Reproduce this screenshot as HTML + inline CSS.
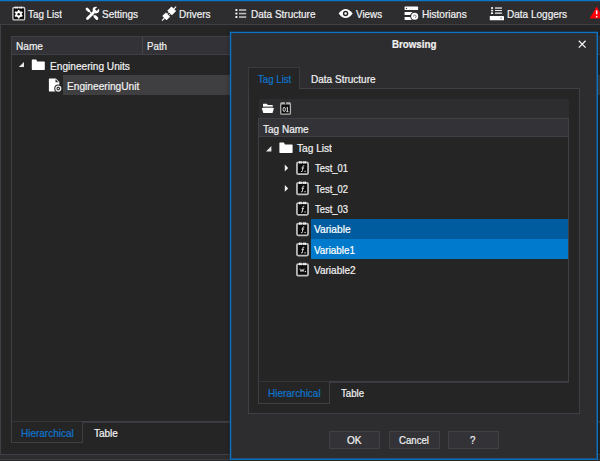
<!DOCTYPE html>
<html><head><meta charset="utf-8">
<style>
*{box-sizing:border-box;margin:0;padding:0}
html,body{width:600px;height:461px;overflow:hidden;background:#252526;font-family:"Liberation Sans",sans-serif;font-size:11px;color:#f1f1f1}
.a{position:absolute}
.t{position:absolute;white-space:nowrap;line-height:14px;height:14px;font-size:11px;transform-origin:0 0;-webkit-text-stroke:0.22px currentColor}
svg{position:absolute;overflow:visible}
</style></head><body>
<!-- toolbar -->
<div class="a" style="left:0;top:0;width:600px;height:25px;background:#2d2d30"></div>
<div class="a" style="left:0;top:0;width:600px;height:1px;background:#0479cb"></div>
<div class="a" style="left:0;top:1px;width:600px;height:1px;background:#2b3d4e"></div>
<div class="a" style="left:0;top:24px;width:600px;height:1px;background:#3f3f46"></div>
<!-- main panel -->
<div class="a" style="left:0;top:25px;width:600px;height:429px;background:#252526"></div>
<div class="a" style="left:0;top:25px;width:1px;height:430px;background:#3f3f46"></div>
<div class="a" style="left:0;top:454px;width:600px;height:1px;background:#3f3f46"></div>
<div class="a" style="left:0;top:455px;width:600px;height:6px;background:#2d2d30"></div>
<div class="a" style="left:0;top:459px;width:600px;height:1px;background:#3b3b41"></div>
<!-- left grid -->
<div class="a" style="left:11px;top:36px;width:600px;height:386px;background:#252526;border:1px solid #3f3f46"></div>
<div class="a" style="left:83px;top:422px;width:520px;height:1px;background:#38383d"></div>
<div class="a" style="left:12px;top:37px;width:600px;height:18px;background:#333337;border-bottom:1px solid #3f3f46"></div>
<div class="a" style="left:142px;top:37px;width:1px;height:17px;background:#46464a"></div>
<div class="a" style="left:63px;top:75px;width:540px;height:20px;background:#3f3f41"></div>
<div class="a" style="left:11px;top:421px;width:72px;height:22px;border:1px solid #3f3f46;border-top:1px solid #36363b;background:#252526"></div>

<!-- dialog -->
<div class="a" style="left:231px;top:33px;width:366px;height:426px;box-shadow:0 0 4px 1px rgba(0,0,0,0.45)"></div>
<svg style="left:0;top:0" width="600" height="461"><rect x="230.5" y="32.4" width="366.8" height="426.8" fill="#2d2d30" stroke="#0d73c5" stroke-width="1.4"/></svg>
<!-- tab + inner panel -->
<div class="a" style="left:248px;top:88px;width:332px;height:326px;background:#252526;border:1px solid #3f3f46"></div>
<div class="a" style="left:248px;top:67px;width:52px;height:22px;background:#252526;border:1px solid #3a3a3e;border-bottom:none"></div>
<!-- toolbar band -->
<div class="a" style="left:259px;top:99px;width:310px;height:20px;background:#2d2d30"></div>
<!-- grid -->
<div class="a" style="left:258px;top:118px;width:311px;height:264px;background:#252526;border:1px solid #3f3f46"></div>
<div class="a" style="left:330px;top:382px;width:239px;height:1px;background:#38383d"></div>
<div class="a" style="left:259px;top:119px;width:309px;height:18px;background:#333337;border-bottom:1px solid #3f3f46"></div>
<div class="a" style="left:311px;top:219px;width:257px;height:20px;background:#005c9f"></div>
<div class="a" style="left:311px;top:239px;width:257px;height:20px;background:#007acc"></div>
<div class="a" style="left:258px;top:381px;width:72px;height:23px;border:1px solid #3f3f46;border-top:1px solid #36363b;background:#252526"></div>
<!-- buttons -->
<div class="a" style="left:329px;top:431px;width:51px;height:18px;background:#333337;border:1px solid #414145"></div>
<div class="a" style="left:389px;top:431px;width:51px;height:18px;background:#333337;border:1px solid #414145"></div>
<div class="a" style="left:448px;top:431px;width:51px;height:18px;background:#333337;border:1px solid #414145"></div>
<!-- close X -->
<svg style="left:578px;top:40px" width="9" height="9" viewBox="0 0 9 9"><path d="M0.8 0.8L7.6 7.6M7.6 0.8L0.8 7.6" stroke="#f1f1f1" stroke-width="1.3" fill="none"/></svg>
<!-- ICONS -->
<svg style="left:0;top:0" width="600" height="461" viewBox="0 0 600 461">
<!-- taglist toolbar icon -->
<g>
<rect x="12.9" y="7.5" width="11.8" height="12.4" rx="1.2" fill="#0c0c0c" stroke="#cfcfcf" stroke-width="1.3"/>
<path d="M15.2 7.6h1.1M16.8 7.6h1.1M19.4 7.6h1.1M21 7.6h1.1" stroke="#fff" stroke-width="1.9"/>
<circle cx="18.7" cy="14.2" r="3.1" fill="#fff"/>
<path d="M18.7 9.9v8.6M15 12.05l7.4 4.3M15 16.35l7.4 -4.3" stroke="#fff" stroke-width="1.7"/>
<circle cx="18.7" cy="14.2" r="1.25" fill="#111"/>
</g>
<!-- tools -->
<g stroke-linecap="round" fill="none" stroke="#fff">
<path d="M87 9l1.9 1.9" stroke-width="2.7"/>
<path d="M89 11l4.2 4.2" stroke-width="1.2"/>
<path d="M95 16.5l1.9 1.9" stroke-width="2.9"/>
<path d="M87.5 18.5l7 -7" stroke-width="2.8"/>
<circle cx="95.9" cy="10.1" r="3.3" fill="#fff" stroke="none"/>
<path d="M95.8 10.2l4.3 -4.3" stroke="#2d2d30" stroke-width="2.5" stroke-linecap="butt"/>
</g>
<!-- plug -->
<g fill="#fff" stroke="none">
<rect x="-3.3" y="-3" width="6.6" height="6" transform="translate(171.7 10.9) rotate(45)"/>
<rect x="-3" y="-2.6" width="6" height="5.2" transform="translate(166.2 16.4) rotate(45)"/>
<path d="M173.5 9.3l2.6 -2.6M164.6 18l-2.6 2.6" stroke="#fff" stroke-width="1.1"/>
<path d="M169 12.2l-1.6 1.6M170.5 13.7l-1.6 1.6" stroke="#fff" stroke-width="0.9"/>
</g>
<!-- list -->
<g>
<rect x="235.3" y="9" width="2.2" height="2.1" rx="0.8" fill="#fff"/><rect x="239" y="9.25" width="7.2" height="1.6" fill="#bdbdbd"/>
<rect x="235.3" y="12.5" width="2.2" height="2.1" rx="0.8" fill="#fff"/><rect x="239" y="12.75" width="7.2" height="1.6" fill="#bdbdbd"/>
<rect x="235.3" y="16" width="2.2" height="2.1" rx="0.8" fill="#fff"/><rect x="239" y="16.25" width="7.2" height="1.6" fill="#bdbdbd"/>
</g>
<!-- eye -->
<g>
<path d="M338.6 13.5Q345.6 4.3 352.7 13.5Q345.6 22.7 338.6 13.5Z" fill="#fff"/>
<circle cx="345.6" cy="13.5" r="2" fill="none" stroke="#262628" stroke-width="1.45"/>
</g>
<!-- historians -->
<g>
<rect x="404.6" y="6.6" width="13.5" height="3.5" rx="0.6" fill="#fff"/>
<circle cx="406.5" cy="8.35" r="0.7" fill="#222"/>
<rect x="404.6" y="12.1" width="8" height="3" rx="0.4" fill="#fff"/>
<rect x="404.6" y="17.1" width="8" height="3" rx="0.4" fill="#fff"/>
<circle cx="414.7" cy="16.3" r="4.6" fill="#2d2d30"/>
<circle cx="414.7" cy="16.3" r="3.5" fill="#fff"/>
<path d="M413.5 16.5a1.35 1.35 0 1 1 1.5 1.2" stroke="#777" stroke-width="0.9" fill="none"/>
</g>
<!-- data loggers -->
<g>
<rect x="491" y="7.2" width="2.1" height="1.6" fill="#fff"/><rect x="495" y="7.2" width="7" height="1.7" fill="#bdbdbd"/>
<rect x="491" y="9.8" width="2.1" height="1.6" fill="#e0e0e0"/><rect x="495" y="10" width="7" height="1" fill="#e8e8e8"/>
<rect x="491" y="12.4" width="2.1" height="1.6" fill="#fff"/><rect x="495" y="12.3" width="7" height="1.7" fill="#bdbdbd"/>
<rect x="489.8" y="16" width="14.2" height="4.3" rx="0.4" fill="#fff"/>
<rect x="500.4" y="17.4" width="1.5" height="1.4" fill="#999"/>
</g>
<!-- red warning -->
<g>
<path d="M596.6 6.6L589.6 18.6H603.6Z" fill="#fb0007"/>
<rect x="595.9" y="10.4" width="1.5" height="3.9" fill="#fff"/>
<rect x="595.9" y="15.9" width="1.5" height="1.6" fill="#fff"/>
</g>
<!-- expanders -->
<path d="M24 62v4.9h-5.2Z" fill="#e6e6e6"/>
<path d="M271.4 146v5.4h-5.4Z" fill="#e6e6e6"/>
<path d="M284.8 164.6l3.4 3.4l-3.4 3.4Z" fill="#f1f1f1"/>
<path d="M284.8 185l3.4 3.4l-3.4 3.4Z" fill="#f1f1f1"/>
<!-- folders -->
<path d="M32.3 59.6h3.9l1 1.8h7q0.6 0 0.6 0.6v7.3q0 0.6 -0.6 0.6h-11.8q-0.6 0 -0.6 -0.6v-9.1q0 -0.6 0.5 -0.6Z" fill="#fff"/>
<path d="M279.9 142.6h4l1 1.8h7.1q0.6 0 0.6 0.6v7.3q0 0.6 -0.6 0.6h-12q-0.6 0 -0.6 -0.6v-9.1q0 -0.6 0.5 -0.6Z" fill="#fff"/>
<!-- file w gear -->
<g>
<path d="M49.5 78.4h6.3l3.5 3.6v9q0 0.6 -0.6 0.6h-9.2q-0.6 0 -0.6 -0.6v-12q0 -0.6 0.6 -0.6Z" fill="#fff"/>
<path d="M55.5 79.3v3h3Z" fill="#252526"/>
<circle cx="58.3" cy="88.6" r="4.1" fill="#252526"/>
<circle cx="58.3" cy="88.6" r="2.45" fill="none" stroke="#ececec" stroke-width="1.3"/>
<circle cx="58.3" cy="88.6" r="0.8" fill="#e8e8e8"/>
</g>
<!-- open folder -->
<g>
<path d="M263 104.2q0 -0.5 0.5 -0.5h3.3l1 1.3h4.5q0.5 0 0.5 0.5v1h-9.8Z" fill="#fff"/>
<rect x="263" y="106.3" width="9.8" height="1.2" fill="#b8b8b8"/>
<path d="M261.8 108h12.2l-1.3 4.6q-0.15 0.5 -0.7 0.5h-8.2q-0.55 0 -0.7 -0.5Z" fill="#fff"/>
</g>
<!-- 01 icon -->
<g>
<rect x="280.7" y="103" width="9.7" height="11.1" rx="0.9" fill="#0a0a0a" stroke="#b2b2b2" stroke-width="1.3"/>
<rect x="281" y="103" width="9.1" height="1.5" fill="#b2b2b2"/>
<rect x="285" y="102" width="1.2" height="2.6" fill="#333335"/>
<ellipse cx="284.2" cy="109.4" rx="1.15" ry="2.15" fill="none" stroke="#e6e6e6" stroke-width="0.95"/>
<path d="M286.5 108l0.9 -0.8v4.4M286.3 111.7h2.2" fill="none" stroke="#e6e6e6" stroke-width="0.95"/>
</g>
</svg>
<svg style="left:0;top:0" width="600" height="461" viewBox="0 0 600 461">
<g transform="translate(296 161.2)"><rect x="0.95" y="1.25" width="11.1" height="11.7" rx="1.2" fill="#0b0b0b" stroke="#bebebe" stroke-width="1.75"/><path d="M3.1 1.2h1.05M4.55 1.2h1.05M7.3 1.2h1.05M8.75 1.2h1.05" stroke="#fff" stroke-width="2.4"/><path d="M8.3 4.7Q6.9 4 6.8 5.6L6.5 9.3Q6.4 10.9 5.1 10.3M5.6 6.8h2.4" fill="none" stroke="#d6d6d6" stroke-width="1"/><rect x="8.5" y="9.6" width="1.2" height="1.2" fill="#e4e4e4"/></g>
<g transform="translate(296 181.5)"><rect x="0.95" y="1.25" width="11.1" height="11.7" rx="1.2" fill="#0b0b0b" stroke="#bebebe" stroke-width="1.75"/><path d="M3.1 1.2h1.05M4.55 1.2h1.05M7.3 1.2h1.05M8.75 1.2h1.05" stroke="#fff" stroke-width="2.4"/><path d="M8.3 4.7Q6.9 4 6.8 5.6L6.5 9.3Q6.4 10.9 5.1 10.3M5.6 6.8h2.4" fill="none" stroke="#d6d6d6" stroke-width="1"/><rect x="8.5" y="9.6" width="1.2" height="1.2" fill="#e4e4e4"/></g>
<g transform="translate(296 201.8)"><rect x="0.95" y="1.25" width="11.1" height="11.7" rx="1.2" fill="#0b0b0b" stroke="#bebebe" stroke-width="1.75"/><path d="M3.1 1.2h1.05M4.55 1.2h1.05M7.3 1.2h1.05M8.75 1.2h1.05" stroke="#fff" stroke-width="2.4"/><path d="M8.3 4.7Q6.9 4 6.8 5.6L6.5 9.3Q6.4 10.9 5.1 10.3M5.6 6.8h2.4" fill="none" stroke="#d6d6d6" stroke-width="1"/><rect x="8.5" y="9.6" width="1.2" height="1.2" fill="#e4e4e4"/></g>
<g transform="translate(296 222.3)"><rect x="0.95" y="1.25" width="11.1" height="11.7" rx="1.2" fill="#0b0b0b" stroke="#bebebe" stroke-width="1.75"/><path d="M3.1 1.2h1.05M4.55 1.2h1.05M7.3 1.2h1.05M8.75 1.2h1.05" stroke="#fff" stroke-width="2.4"/><path d="M8.3 4.7Q6.9 4 6.8 5.6L6.5 9.3Q6.4 10.9 5.1 10.3M5.6 6.8h2.4" fill="none" stroke="#d6d6d6" stroke-width="1"/><rect x="8.5" y="9.6" width="1.2" height="1.2" fill="#e4e4e4"/></g>
<g transform="translate(296 242.6)"><rect x="0.95" y="1.25" width="11.1" height="11.7" rx="1.2" fill="#0b0b0b" stroke="#bebebe" stroke-width="1.75"/><path d="M3.1 1.2h1.05M4.55 1.2h1.05M7.3 1.2h1.05M8.75 1.2h1.05" stroke="#fff" stroke-width="2.4"/><path d="M8.3 4.7Q6.9 4 6.8 5.6L6.5 9.3Q6.4 10.9 5.1 10.3M5.6 6.8h2.4" fill="none" stroke="#d6d6d6" stroke-width="1"/><rect x="8.5" y="9.6" width="1.2" height="1.2" fill="#e4e4e4"/></g>
<g transform="translate(296 262.8)"><rect x="0.95" y="1.25" width="11.1" height="11.7" rx="1.2" fill="#0b0b0b" stroke="#bebebe" stroke-width="1.75"/><path d="M3.1 1.2h1.05M4.55 1.2h1.05M7.3 1.2h1.05M8.75 1.2h1.05" stroke="#fff" stroke-width="2.4"/><path d="M3.9 5.8L5 8.9L6 6.5L7 8.9L8.1 5.8" fill="none" stroke="#bdbdbd" stroke-width="1"/><rect x="8.8" y="8.1" width="1.2" height="1.2" fill="#e4e4e4"/></g>
</svg>

<!-- texts -->
<div class="t" style="left:28.30px;top:6.90px;color:#f1f1f1;transform:scaleX(0.8939)">Tag List</div>
<div class="t" style="left:102.10px;top:6.90px;color:#f1f1f1;transform:scaleX(0.9082)">Settings</div>
<div class="t" style="left:179.10px;top:6.90px;color:#f1f1f1;transform:scaleX(0.9069)">Drivers</div>
<div class="t" style="left:251.10px;top:6.90px;color:#f1f1f1;transform:scaleX(0.9095)">Data Structure</div>
<div class="t" style="left:356.10px;top:6.90px;color:#f1f1f1;transform:scaleX(0.8952)">Views</div>
<div class="t" style="left:421.80px;top:6.90px;color:#f1f1f1;transform:scaleX(0.9140)">Historians</div>
<div class="t" style="left:506.85px;top:6.90px;color:#f1f1f1;transform:scaleX(0.9100)">Data Loggers</div>
<div class="t" style="left:16.00px;top:38.90px;color:#f1f1f1;transform:scaleX(0.9201)">Name</div>
<div class="t" style="left:146.90px;top:38.90px;color:#f1f1f1;transform:scaleX(0.8834)">Path</div>
<div class="t" style="left:49.60px;top:58.50px;color:#f1f1f1;transform:scaleX(0.9200)">Engineering Units</div>
<div class="t" style="left:66.90px;top:78.70px;color:#f1f1f1;transform:scaleX(0.9236)">EngineeringUnit</div>
<div class="t" style="left:20.80px;top:425.60px;color:#1075cd;transform:scaleX(0.9074)">Hierarchical</div>
<div class="t" style="left:93.60px;top:425.60px;color:#f1f1f1;transform:scaleX(0.9089)">Table</div>
<div class="t" style="left:392.10px;top:36.50px;color:#f1f1f1;font-weight:bold;transform:scaleX(0.8858)">Browsing</div>
<div class="t" style="left:257.60px;top:72.20px;color:#1075cd;transform:scaleX(0.8781)">Tag List</div>
<div class="t" style="left:311.10px;top:72.20px;color:#f1f1f1;transform:scaleX(0.9109)">Data Structure</div>
<div class="t" style="left:263.10px;top:122.00px;color:#f1f1f1;transform:scaleX(0.9114)">Tag Name</div>
<div class="t" style="left:297.10px;top:141.20px;color:#f1f1f1;transform:scaleX(0.9203)">Tag List</div>
<div class="t" style="left:314.60px;top:161.40px;color:#f1f1f1;transform:scaleX(0.8564)">Test_01</div>
<div class="t" style="left:314.60px;top:181.80px;color:#f1f1f1;transform:scaleX(0.8564)">Test_02</div>
<div class="t" style="left:314.60px;top:202.20px;color:#f1f1f1;transform:scaleX(0.8564)">Test_03</div>
<div class="t" style="left:314.20px;top:222.40px;color:#ffffff;transform:scaleX(0.9255)">Variable</div>
<div class="t" style="left:314.20px;top:242.80px;color:#ffffff;transform:scaleX(0.8977)">Variable1</div>
<div class="t" style="left:314.20px;top:263.00px;color:#f1f1f1;transform:scaleX(0.9108)">Variable2</div>
<div class="t" style="left:268.10px;top:386.00px;color:#1075cd;transform:scaleX(0.9057)">Hierarchical</div>
<div class="t" style="left:341.10px;top:386.00px;color:#f1f1f1;transform:scaleX(0.8784)">Table</div>
<div class="t" style="left:347.40px;top:433.40px;color:#f1f1f1;transform:scaleX(0.9179)">OK</div>
<div class="t" style="left:398.80px;top:433.40px;color:#f1f1f1;transform:scaleX(0.8759)">Cancel</div>
<div class="t" style="left:470.00px;top:433.40px;color:#f1f1f1;transform:scaleX(0.8816)">?</div>
</body></html>
